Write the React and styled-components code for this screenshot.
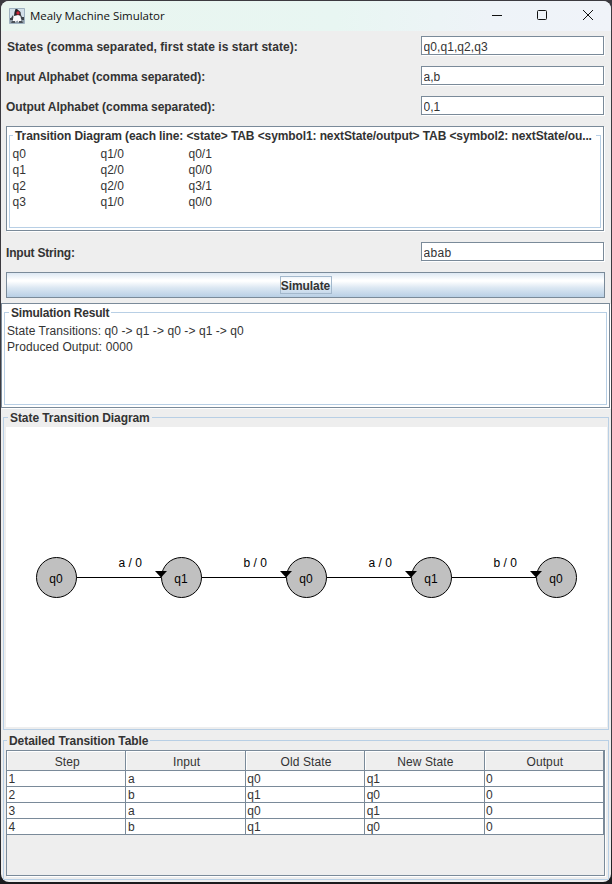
import React from 'react';
import styled, { createGlobalStyle } from 'styled-components';

const steel = '#7a8a99';
const pale = '#b8cfe5';

const GlobalStyle = createGlobalStyle`
  * { box-sizing: border-box; }
  html { min-height: 100%; background: linear-gradient(#3c3a40, #3c3d42 90%, #1b1b1d); }
  body { margin: 0; }
`;

const Window = styled.main`
  width: 610px;
  height: 881px;
  margin: 1px 1px 2px;
  overflow: hidden;
  border-radius: 8px;
  background: #eeeeee;
  color: #333333;
  font: 12px/16px 'Liberation Sans', Arial, sans-serif;
  display: flex;
  flex-direction: column;
`;

const TitleBar = styled.header`
  height: 30px;
  flex: none;
  display: flex;
  align-items: center;
  padding-left: 8px;
  background: linear-gradient(90deg, #e9f5ef 0%, #e8f6f2 55%, #eef3f8 80%, #f0f3f9 100%);
`;

const Caption = styled.h1`
  margin: 0 auto 0 5px;
  font: 400 11.5px/16px 'Open Sans', 'Noto Sans', sans-serif;
  letter-spacing: -0.04px;
  color: #111;
`;

const WindowButton = styled.button`
  width: 46px;
  height: 30px;
  padding: 0 0 2px ${(p) => p.$shift || 0}px;
  border: 0;
  background: none;
  display: grid;
  place-items: center;
`;

const Form = styled.form`
  flex: none;
  display: flex;
  flex-direction: column;
  height: 272px;
  padding: 5px 5px 0;
`;

const FormRow = styled.label`
  display: flex;
  flex: none;
  justify-content: space-between;
  height: 20px;
  margin-top: ${(p) => p.$top || 0}px;
  margin-bottom: 10px;
  padding-right: 2px;
  padding-left: ${(p) => p.$indent || 0}px;
`;

const Bold = styled.span`
  font-weight: 700;
  line-height: 22px;
  white-space: pre;
  letter-spacing: ${(p) => p.$spacing || 0}px;
`;

const Field = styled.input`
  width: 183px;
  height: 19px;
  padding: 2px 0 0 1.5px;
  border: 1px solid ${steel};
  border-radius: 0;
  outline: none;
  background: #fff;
  box-shadow: 1px 1px 0 #fff;
  color: #333;
  font: 12px/16px 'Liberation Sans', Arial, sans-serif;
  letter-spacing: ${(p) => p.$spacing || 0}px;
`;

const Sunken = styled.section`
  flex: none;
  height: 105px;
  width: ${(p) => p.$width}px;
  padding: 8px 2px 3px;
  border: 1px solid ${steel};
  background: #fff;
  box-shadow: 1px 1px 0 #fff;
`;

const Group = styled.section`
  display: flex;
  flex-direction: column;
  flex: none;
  height: ${(p) => p.$height}px;
  margin: ${(p) => p.$margin || 0};
  border: 1px solid ${pale};
  background: ${(p) => p.$back || '#eeeeee'};
`;

const Legend = styled.h2`
  align-self: flex-start;
  flex: none;
  height: 16px;
  margin: -8px 0 0 ${(p) => p.$left}px;
  padding: 0 ${(p) => p.$right || 2}px 0 2px;
  background: ${(p) => p.$back || '#eeeeee'};
  font-size: 12px;
  font-weight: 700;
  line-height: 16px;
  white-space: pre;
  letter-spacing: ${(p) => p.$spacing || 0}px;
`;

const Definition = styled.div`
  display: grid;
  grid-template-columns: 88px 88px 88px;
  grid-auto-rows: 16px;
  padding: 2px 0 0 2.5px;
  white-space: pre;
`;

const SimulateButton = styled.button`
  width: 599px;
  height: 26px;
  flex: none;
  padding: 0;
  border: 1px solid ${steel};
  background: linear-gradient(#dde8f3 0%, #ffffff 30%, #ffffff 34%, #dbe7f2 62%, #b8cfe5 100%);
  color: #333;
  font: 700 12px/16px 'Liberation Sans', Arial, sans-serif;
  display: flex;
  align-items: center;
  justify-content: center;
`;

const FocusRing = styled.span`
  height: 18px;
  width: 52px;
  border: 1px solid #a3b8cc;
  line-height: 18px;
  letter-spacing: -0.08px;
`;

const ResultLine = styled.p`
  margin: 0 0 0 2px;
  line-height: 16px;
  letter-spacing: 0.075px;

  &:first-of-type { margin-top: 2px; }
`;

const Canvas = styled.div`
  flex: 1;
  margin: 1px 1px 2px 2px;
  background: #fff;

  svg { display: block; }
`;

const TableFrame = styled.div`
  width: 599px;
  height: 126px;
  margin: 1px 0 0 2px;
  border: 1px solid ${steel};
  box-shadow: 1px 1px 0 #fff;
`;

const Table = styled.table`
  width: 597px;
  table-layout: fixed;
  border-collapse: separate;
  border-spacing: 0;
`;

const HeadCell = styled.th`
  height: 20px;
  padding: 2px 0 0 2px;
  border: 0 solid ${steel};
  border-width: 0 1px 1px 0;
  box-shadow: inset 1px 1px 0 #fff;
  font-weight: 400;
  line-height: 16px;
  letter-spacing: 0.1px;
`;

const Cell = styled.td`
  height: 16px;
  padding: 1px 0 0 1.5px;
  border: 0 solid ${steel};
  border-width: 0 1px 1px 0;
  background: #fff;
  line-height: 14px;
`;

function JavaIcon() {
  return (
    <svg width="16" height="16" viewBox="0 0 16 16" aria-hidden="true">
      <path d="M0 0h16v16H0z" fill="#d3e0e9" />
      <path d="M1 10h14v5H1z" fill="#8f9ca6" />
      <path d="M.5.5h15v15H.5z" fill="none" stroke="#9fb2c0" />
      <path d="M4 7L2 10H1v2h3l1-2zM12 7l1 2h2v3h-2l-2-3z" fill="#3f454b" />
      <path d="M5 7h6l1 4v3H9.500l-1-1.500L6 14H4v-3z" fill="#fafafa" />
      <path d="M3 13h3v2H2zM10 13h3l1 2h-4z" fill="#4b5258" />
      <path d="M6.500 1H8l3.500 3 .5 4-3-1-4 1 .5-4z" fill="#252427" />
      <circle cx="9" cy="5" r="1.700" fill="#cf2638" />
    </svg>
  );
}

const definition = [
  ['q0', 'q1/0', 'q0/1'],
  ['q1', 'q2/0', 'q0/0'],
  ['q2', 'q2/0', 'q3/1'],
  ['q3', 'q1/0', 'q0/0'],
];
const path = ['q0', 'q1', 'q0', 'q1', 'q0'];
const steps = [
  ['a', 'q0', 'q1', '0'],
  ['b', 'q1', 'q0', '0'],
  ['a', 'q0', 'q1', '0'],
  ['b', 'q1', 'q0', '0'],
];

function Diagram() {
  return (
    <svg width="601" height="300" viewBox="6 427 601 300" fontFamily="'Liberation Sans', Arial, sans-serif" fontSize="12" fill="#000">
      {path.map((state, i) => {
        const x = 56.5 + i * 125;
        return (
          <g key={i}>
            <circle cx={x} cy="577.5" r="20" fill="#c0c0c0" stroke="#000" />
            <text x={x - 0.5} y="583" textAnchor="middle">{state}</text>
          </g>
        );
      })}
      {steps.map((step, i) => {
        const x = 76 + i * 125;
        return (
          <g key={i}>
            <path d={`M${x + 0.5} 577.5H${x + 85}`} stroke="#000" />
            <path d={`M${x + 79} 571h12l-6 6.5z`} />
            <text x={x + 42.5} y="567">{`${step[0]} / ${step[3]}`}</text>
          </g>
        );
      })}
    </svg>
  );
}

export default function App() {
  return (
    <>
      <GlobalStyle />
      <Window>
        <TitleBar>
          <JavaIcon />
          <Caption>Mealy Machine Simulator</Caption>
          <WindowButton type="button" aria-label="Minimize" $shift={2}>
            <svg width="10" height="10"><path d="M0 5.5h10" stroke="#111" /></svg>
          </WindowButton>
          <WindowButton type="button" aria-label="Maximize">
            <svg width="10" height="10"><rect x=".5" y=".5" width="9" height="9" rx="1" fill="none" stroke="#111" /></svg>
          </WindowButton>
          <WindowButton type="button" aria-label="Close">
            <svg width="10" height="10"><path d="M0 0l10 10M10 0L0 10" stroke="#111" /></svg>
          </WindowButton>
        </TitleBar>

        <Form>
          <FormRow $indent={1}>
            <Bold $spacing={0.05}>States (comma separated, first state is start state):</Bold>
            <Field $spacing={0.08} defaultValue="q0,q1,q2,q3" />
          </FormRow>
          <FormRow>
            <Bold $spacing={-0.055}>Input Alphabet (comma separated):</Bold>
            <Field defaultValue="a,b" />
          </FormRow>
          <FormRow>
            <Bold $spacing={-0.05}>Output Alphabet (comma separated):</Bold>
            <Field defaultValue="0,1" />
          </FormRow>
          <Sunken $width={598}>
            <Group $height={93} $back="#fff">
              <Legend $left={3} $right={4} $back="#fff" $spacing={-0.105}>
                {'Transition Diagram (each line: <state> TAB <symbol1: nextState/output> TAB <symbol2: nextState/ou...'}
              </Legend>
              <Definition>
                {definition.flat().map((entry, i) => <span key={i}>{entry}</span>)}
              </Definition>
            </Group>
          </Sunken>
          <FormRow $top={11}>
            <Bold $spacing={-0.2}>Input String:</Bold>
            <Field $spacing={0.3} defaultValue="abab" />
          </FormRow>
          <SimulateButton type="button"><FocusRing>Simulate</FocusRing></SimulateButton>
        </Form>

        <Sunken $width={609}>
          <Group $height={93} $back="#fff">
            <Legend $left={4} $back="#fff" $spacing={-0.18}>Simulation Result</Legend>
            <ResultLine>{'State Transitions: q0 -> q1 -> q0 -> q1 -> q0'}</ResultLine>
            <ResultLine>Produced Output: 0000</ResultLine>
          </Group>
        </Sunken>

        <Group $height={313} $margin="9px 2px 0 2px">
          <Legend $left={4} $spacing={-0.07}>State Transition Diagram</Legend>
          <Canvas><Diagram /></Canvas>
        </Group>

        <Group $height={140} $margin="10px 2px 0 2px">
          <Legend $left={3} $spacing={-0.07}>Detailed Transition Table</Legend>
          <TableFrame>
            <Table>
              <thead>
                <tr>{['Step', 'Input', 'Old State', 'New State', 'Output'].map((h) => <HeadCell key={h}>{h}</HeadCell>)}</tr>
              </thead>
              <tbody>
                {steps.map((step, i) => (
                  <tr key={i}>
                    <Cell>{i + 1}</Cell>
                    {step.map((value, j) => <Cell key={j}>{value}</Cell>)}
                  </tr>
                ))}
              </tbody>
            </Table>
          </TableFrame>
        </Group>
      </Window>
    </>
  );
}
